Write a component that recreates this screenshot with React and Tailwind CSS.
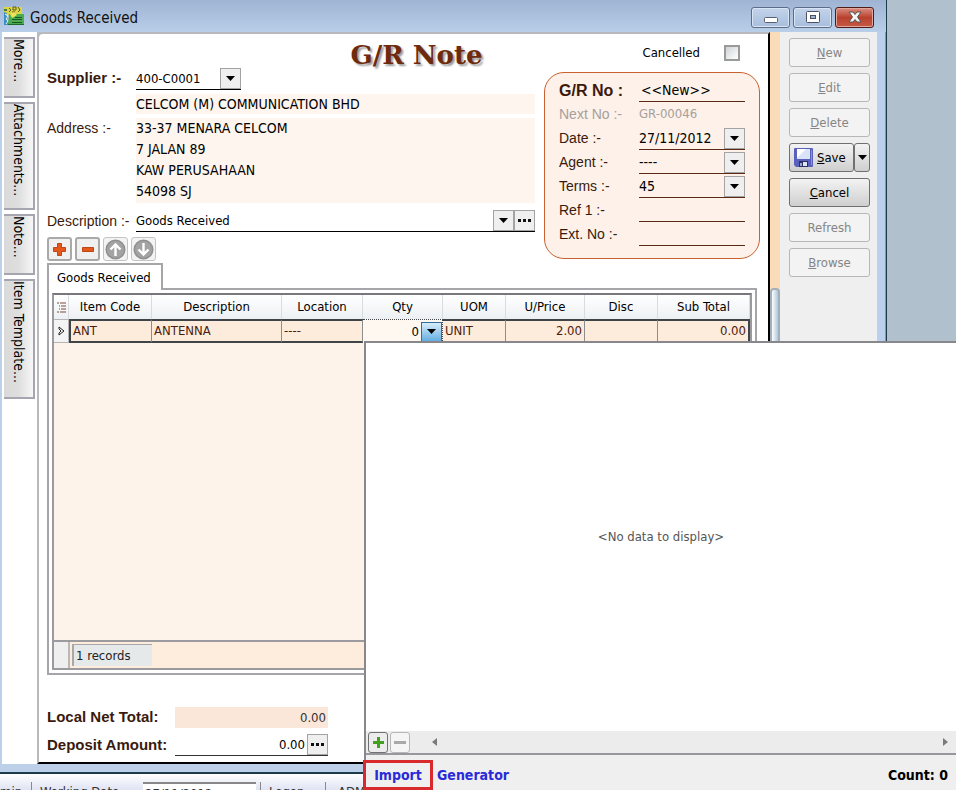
import { clsx } from "clsx";

const tahoma = "font-['DejaVu_Sans_Condensed','DejaVu_Sans',sans-serif]";

const sideTabs = [
  { label: "More...", height: "h-[61px]" },
  { label: "Attachments...", height: "h-[108px]" },
  { label: "Note...", height: "h-[61px]" },
  { label: "Item Template...", height: "h-[120px]" },
];

const columns = [
  { label: "Item Code", width: "w-[83px]" },
  { label: "Description", width: "w-[130px]" },
  { label: "Location", width: "w-[81px]" },
  { label: "Qty", width: "w-[80px]" },
  { label: "UOM", width: "w-[63px]" },
  { label: "U/Price", width: "w-[79px]" },
  { label: "Disc", width: "w-[73px]" },
  { label: "Sub Total", width: "" },
];

const Caret = () => (
  <svg width="9" height="5" viewBox="0 0 9 5" className="shrink-0">
    <path d="M0 0h9L4.5 5z" fill="#000" />
  </svg>
);

const Dots = () => (
  <svg width="13" height="3" viewBox="0 0 13 3" className="shrink-0">
    <path d="M0 0h3v3H0zM5 0h3v3H5zM10 0h3v3h-3z" fill="#111" />
  </svg>
);

const SmallButton = ({ label, children }) => (
  <button
    type="button"
    aria-label={label}
    className="flex h-[21px] w-[21px] shrink-0 items-center justify-center border border-[#a3a3a3] bg-[#efefef]"
  >
    {children}
  </button>
);

const AppIcon = () => (
  <svg width="20" height="20" viewBox="0 0 20 20">
    <path d="M0 1h18v8H0z" fill="#dcd544" />
    <path d="M5 2l2 2-2 2M9 1h3v3H9zM14 1l2 3-2 2M8 6h3" stroke="#5a5a22" fill="none" />
    <path d="M0 3h3v2H0z" fill="#4a7a3a" />
    <path d="M0 6l3 1-1 2 2 2-1 3 2 2v3H0z" fill="#3b8fc4" />
    <path d="M1 8l3 2-2 3 2 2-2 3" stroke="#e7f3fa" fill="none" />
    <path d="M5 8h15v11H4z" fill="#4aac4c" />
    <path d="M4 18h16v1H4z" fill="#1e6a2b" />
    <path d="M11 11.500h7M8 13.500h10M8 16.500h10" stroke="#175726" />
    <path d="M6 8l4-2 3 3-5 3z" fill="#ece35a" />
  </svg>
);

const FloppyIcon = () => (
  <svg width="19" height="19" viewBox="0 0 19 19">
    <path d="M0 1q0-1 1-1h17q1 0 1 1v17q0 1-1 1H2l-2-2z" fill="#5b60bd" />
    <path d="M3 1h13v10H3z" fill="#d9e4f8" />
    <path d="M3 1h9L3 10z" fill="#fff" />
    <path d="M5 13h9v6H5z" fill="#2c2f62" />
    <path d="M9 14h4v4H9z" fill="#dfe6f5" />
    <path d="M6 15h2v3H6z" fill="#9ea4cc" />
    <path d="M17 2h1v15h-1z" fill="#8a90e0" />
  </svg>
);

const ArrowIcon = ({ down }) => (
  <svg width="21" height="21" viewBox="0 0 21 21" className={clsx(down && "rotate-180")}>
    <circle cx="10.5" cy="10.5" r="10" fill="#8f8f8f" />
    <circle cx="10.5" cy="10.5" r="8.5" fill="#a3a3a3" />
    <path d="M10.5 17V6M5.5 10.5l5-5 5 5" stroke="#fff" strokeWidth="2.4" fill="none" />
  </svg>
);

const TitleBar = () => (
  <header className="flex h-8 shrink-0 items-center bg-linear-to-b from-[#9fb4d3] to-[#b9cee8] pl-1">
    <AppIcon />
    <h1 className={clsx(tahoma, "ml-1.5 flex-1 pt-1 text-[15px] text-[#111]")}>Goods Received</h1>
    <div className="mr-3 flex gap-[3px] pt-0.5">
      <button type="button" aria-label="Minimize" className="flex h-[21px] w-[39px] items-center justify-center rounded-[3px] border border-[#5d6d87] bg-linear-to-b from-[#c3d3ea] to-[#a7bedd] shadow-[inset_0_0_0_1px_#d9e5f5]">
        <svg width="14" height="7" viewBox="0 0 14 7" className="mt-1.5">
          <rect x=".5" y=".5" width="13" height="5" rx="1" fill="#fff" stroke="#5b6070" />
        </svg>
      </button>
      <button type="button" aria-label="Maximize" className="flex h-[21px] w-[39px] items-center justify-center rounded-[3px] border border-[#5d6d87] bg-linear-to-b from-[#c3d3ea] to-[#a7bedd] shadow-[inset_0_0_0_1px_#d9e5f5]">
        <svg width="14" height="12" viewBox="0 0 14 12">
          <rect x=".5" y=".5" width="13" height="11" rx="1" fill="#fff" stroke="#4b5060" />
          <rect x="4.5" y="4.5" width="5" height="3" fill="#9fb4d4" stroke="#4b5060" />
        </svg>
      </button>
      <button type="button" aria-label="Close" className="flex h-[21px] w-[39px] items-center justify-center rounded-[3px] border border-[#4f1a18] bg-linear-to-b from-[#d98d80] via-[#b9402e] to-[#c65a44] shadow-[inset_0_0_0_1px_#e2a79c]">
        <svg width="14" height="12" viewBox="0 0 14 12">
          <path d="M1 1h4l2 2.5L9 1h4L9.500 6l3.500 5H9L7 8.500 5 11H1l3.500-5z" fill="#f4f4f4" stroke="#555" />
        </svg>
      </button>
    </div>
  </header>
);

const SideTabs = () => (
  <nav className="flex w-[35px] shrink-0 flex-col gap-1 bg-white pt-[5px] pl-0.5">
    {sideTabs.map((tab) => (
      <button
        key={tab.label}
        type="button"
        className={clsx(
          tab.height,
          tahoma,
          "flex w-[31px] shrink-0 items-center border-2 border-l-0 border-[#a6a6b0] bg-linear-to-r from-[#dadada] via-[#dedede] to-[#f7f7f7] text-sm text-black [writing-mode:vertical-rl]"
        )}
      >
        {tab.label}
      </button>
    ))}
  </nav>
);

const ActionButton = ({ children, disabled }) => (
  <button
    type="button"
    disabled={disabled}
    className={clsx(
      "h-[29px] w-full rounded-[3px] border text-[13px]",
      disabled
        ? "border-[#b4b8ba] bg-[#f3f3f3] text-[#858585]"
        : "border-[#707070] bg-linear-to-b from-[#f3f3f3] to-[#cfcfcf] text-black"
    )}
  >
    {children}
  </button>
);

const Actions = () => (
  <aside className={clsx(tahoma, "flex w-[97px] shrink-0 flex-col gap-1.5 bg-[#efefef] pt-1.5 pr-[7px] pl-[9px]")}>
    <ActionButton disabled><u>N</u>ew</ActionButton>
    <ActionButton disabled><u>E</u>dit</ActionButton>
    <ActionButton disabled><u>D</u>elete</ActionButton>
    <div className="flex">
      <button type="button" className="flex h-[29px] flex-1 items-center gap-1 rounded-[3px] border border-[#707070] bg-linear-to-b from-[#f3f3f3] to-[#cfcfcf] pl-1 text-[13px] text-black">
        <FloppyIcon />
        <span><u>S</u>ave</span>
      </button>
      <button type="button" aria-label="Save options" className="flex h-[29px] w-4 items-center justify-center rounded-[3px] border border-[#707070] bg-linear-to-b from-[#f3f3f3] to-[#cfcfcf]">
        <Caret />
      </button>
    </div>
    <ActionButton><u>C</u>ancel</ActionButton>
    <ActionButton disabled>Refresh</ActionButton>
    <ActionButton disabled><u>B</u>rowse</ActionButton>
  </aside>
);

const labelClass = "font-['Liberation_Sans',Arial,sans-serif] text-[#3a1a0c] whitespace-nowrap";
const valueClass = clsx(tahoma, "min-w-0 flex-1 bg-transparent text-black outline-none");

const SupplierForm = () => (
  <div className="grid grid-cols-[89px_1fr] content-start">
    <label htmlFor="supplier" className={clsx(labelClass, "text-[15px] leading-5 font-bold")}>Supplier :-</label>
    <div className="flex w-[105px] border-b border-black">
      <input id="supplier" defaultValue="400-C0001" className={clsx(valueClass, "text-[13px]")} />
      <SmallButton label="Choose supplier"><Caret /></SmallButton>
    </div>
    <span />
    <div className={clsx(tahoma, "mt-1 h-5 bg-[#fef5ee] text-sm leading-5 text-black")}>
      CELCOM (M) COMMUNICATION BHD
    </div>
    <span className={clsx(labelClass, "mt-1 text-sm leading-5")}>Address :-</span>
    <address className={clsx(tahoma, "mt-1 h-[85px] bg-[#fef5ee] text-sm leading-[21px] text-black not-italic")}>
      33-37 MENARA CELCOM<br />
      7 JALAN 89<br />
      KAW PERUSAHAAN<br />
      54098 SJ
    </address>
    <label htmlFor="description" className={clsx(labelClass, "mt-2 text-sm leading-5")}>Description :-</label>
    <div className="mt-[7px] flex border-b border-black">
      <input id="description" defaultValue="Goods Received" className={clsx(valueClass, "text-[13px]")} />
      <SmallButton label="Choose description"><Caret /></SmallButton>
      <SmallButton label="Edit description"><Dots /></SmallButton>
    </div>
  </div>
);

const noteFields = [
  { id: "date", label: "Date :-", value: "27/11/2012", picker: true },
  { id: "agent", label: "Agent :-", value: "----", picker: true },
  { id: "terms", label: "Terms :-", value: "45", picker: true },
  { id: "ref1", label: "Ref 1 :-", value: "" },
  { id: "extno", label: "Ext. No :-", value: "" },
];

const NoteBox = () => (
  <section className="mt-1 flex h-[187px] w-[216px] shrink-0 flex-col rounded-[20px] border border-[#c8602f] bg-[#fdf1e9] px-3.5 pt-1.5">
    <div className="flex h-[23px] items-center">
      <label htmlFor="grno" className={clsx(labelClass, "w-20 text-base font-bold")}>G/R No :</label>
      <input id="grno" defaultValue="<<New>>" className={clsx(valueClass, "h-[22px] border-b border-[#5a2a16] pl-0.5 text-sm")} />
    </div>
    <div className="flex h-6 items-center text-[#a5a09c]">
      <span className="w-20 font-['Liberation_Sans',Arial,sans-serif] text-sm">Next No :-</span>
      <span className={clsx(tahoma, "text-[13px]")}>GR-00046</span>
    </div>
    {noteFields.map((field) => (
      <div key={field.id} className="flex h-6 items-center">
        <label htmlFor={field.id} className={clsx(labelClass, "w-20 text-sm")}>{field.label}</label>
        <div className="flex h-[23px] min-w-0 flex-1 items-end border-b border-[#5a2a16]">
          <input id={field.id} defaultValue={field.value} className={clsx(valueClass, "h-[21px] text-sm")} />
          {field.picker && <SmallButton label={`Choose ${field.id}`}><Caret /></SmallButton>}
        </div>
      </div>
    ))}
  </section>
);

const RowTools = () => (
  <div className="mt-[5px] flex gap-[3px]">
    <button type="button" aria-label="Add row" className="flex h-6 w-[25px] items-center justify-center rounded-[3px] border-2 border-[#a9a9a9] bg-[#f0f0f0]">
      <svg width="13" height="13" viewBox="0 0 13 13">
        <path d="M4.500.5h4v4h4v4h-4v4h-4v-4h-4v-4h4z" fill="#e5581a" stroke="#b8471a" />
      </svg>
    </button>
    <button type="button" aria-label="Remove row" className="flex h-6 w-[25px] items-center justify-center rounded-[3px] border-2 border-[#a9a9a9] bg-[#f0f0f0]">
      <svg width="12" height="5" viewBox="0 0 12 5">
        <path d="M.5.5h11v4H.5z" fill="#e5581a" stroke="#b8471a" />
      </svg>
    </button>
    <button type="button" aria-label="Move up" className="flex h-6 w-[25px] items-center justify-center rounded-[3px] border border-[#c4c4c4] bg-[#f3f3f3]">
      <ArrowIcon />
    </button>
    <button type="button" aria-label="Move down" className="flex h-6 w-[25px] items-center justify-center rounded-[3px] border border-[#c4c4c4] bg-[#f3f3f3]">
      <ArrowIcon down />
    </button>
  </div>
);

const cellClass = "overflow-hidden border-y-2 border-r border-[#8d8d8d] border-y-[#3f4448] bg-[#fdebdb] px-0.5 py-0 whitespace-nowrap";

const ItemGrid = () => (
  <div className="mr-[3px] flex flex-1 flex-col border-2 border-[#a5a5aa] p-[3px]">
    <div className={clsx(tahoma, "flex flex-1 flex-col border-2 border-[#9a9a9f] border-t-[#77777c] bg-[#fdf3ea] text-[13px]")}>
      <table className="w-full table-fixed border-separate border-spacing-0">
        <thead>
          <tr className="h-6 bg-linear-to-b from-white to-[#edf0f3] text-black">
            <th className="w-[15px] border-r border-[#d9dcdf] p-0">
              <svg width="9" height="11" viewBox="0 0 9 11" className="mx-auto">
                <path d="M0 1h2M3 1h6M2 4h1M4 4h5M2 7h1M4 7h5M0 10h2M3 10h6" stroke="#7c4b3c" strokeWidth="1.200" />
              </svg>
            </th>
            {columns.map((col) => (
              <th key={col.label} className={clsx(col.width, "border-r border-[#d9dcdf] p-0 font-normal")}>
                {col.label}
              </th>
            ))}
          </tr>
        </thead>
        <tbody>
          <tr className="h-6 text-[#4a1d10]">
            <td className="border-y border-r border-[#b5b5b5] bg-[#f4f4f4] p-0">
              <svg width="7" height="10" viewBox="0 0 7 10" className="mx-auto">
                <path d="M1 1l5 4-5 4V7l2-2-2-2z" fill="none" stroke="#222" />
              </svg>
            </td>
            <td className={clsx(cellClass, "border-l-2 border-l-[#3f4448]")}>ANT</td>
            <td className={cellClass}>ANTENNA</td>
            <td className={cellClass}>----</td>
            <td className="border-t border-r border-dotted border-[#444] bg-[#fff8f1] p-0 text-black">
              <div className="flex items-center justify-end gap-0.5">
                <span>0</span>
                <button type="button" aria-label="Open quantity list" className="flex h-5 w-[21px] items-center justify-center border border-[#2f6f9f] bg-linear-to-b from-[#d8ecfa] to-[#62aee0]">
                  <Caret />
                </button>
              </div>
            </td>
            <td className={cellClass}>UNIT</td>
            <td className={clsx(cellClass, "text-right")}>2.00</td>
            <td className={cellClass}></td>
            <td className={clsx(cellClass, "border-r-2 border-r-[#3f4448] text-right")}>0.00</td>
          </tr>
        </tbody>
      </table>
      <div className="mt-auto flex h-7 border-t-2 border-[#9a9a9f] bg-[#feecdc]">
        <div className="w-4 border-r-2 border-[#b9b9b9] bg-[#efefef]" />
        <div className="my-0.5 ml-0.5 w-20 border-t border-l-2 border-[#a8a8a8] bg-[#e6e9ea] pl-0.5 leading-[22px] text-[#222]">
          1 records
        </div>
      </div>
    </div>
  </div>
);

const Totals = () => (
  <div className="mt-[31px] mb-1.5 flex w-[281px] flex-col gap-[5px]">
    <div className="flex items-center">
      <span className={clsx(labelClass, "w-[128px] text-[15px] font-bold")}>Local Net Total:</span>
      <span className={clsx(tahoma, "h-[21px] flex-1 bg-[#fbe6da] pr-0.5 text-right text-[13px] leading-[21px] text-[#333]")}>0.00</span>
    </div>
    <div className="flex items-center">
      <label htmlFor="deposit" className={clsx(labelClass, "w-[128px] text-[15px] font-bold")}>Deposit Amount:</label>
      <div className="flex min-w-0 flex-1 border-b border-[#333]">
        <input id="deposit" defaultValue="0.00" className={clsx(valueClass, "pr-0.5 text-right text-[13px]")} />
        <SmallButton label="Edit deposit"><Dots /></SmallButton>
      </div>
    </div>
  </div>
);

const QtyPopup = () => (
  <div className={clsx(tahoma, "absolute top-[341px] right-[3px] bottom-0 left-[364px] flex flex-col border-t-2 border-l-2 border-[#87878c] bg-[#efefef]")}>
    <div className="flex flex-1 items-center justify-center bg-white text-[13px] text-[#555]">
      &lt;No data to display&gt;
    </div>
    <div className="flex h-6 items-center gap-0.5 border-b-2 border-[#97979c] bg-[#ececec] pl-0.5">
      <button type="button" aria-label="Add" className="flex h-[21px] w-5 items-center justify-center rounded-[3px] border border-[#707070] bg-[#ececec]">
        <svg width="11" height="11" viewBox="0 0 11 11">
          <path d="M4 0h3v4h4v3H7v4H4V7H0V4h4z" fill="#43a01e" />
        </svg>
      </button>
      <button type="button" aria-label="Remove" className="flex h-[21px] w-5 items-center justify-center rounded-[3px] border border-[#b4b8ba] bg-[#f5f5f5]">
        <svg width="12" height="3" viewBox="0 0 12 3">
          <path d="M0 0h12v3H0z" fill="#a9a9a9" />
        </svg>
      </button>
      <div className="ml-5 flex flex-1 items-center justify-between pr-2">
        <svg width="5" height="8" viewBox="0 0 5 8"><path d="M5 0v8L0 4z" fill="#7b7b7b" /></svg>
        <svg width="5" height="8" viewBox="0 0 5 8"><path d="M0 0v8l5-4z" fill="#7b7b7b" /></svg>
      </div>
    </div>
    <div className="flex h-[35px] items-center justify-between pt-1 text-sm font-bold">
      <div className="flex">
        <a href="#import" className="-ml-[3px] flex h-[30px] w-[70px] items-center justify-center border-3 border-[#d82a2c] text-[#2a2ad8]">Import</a>
        <a href="#generator" className="ml-1 flex items-center text-[#2a2ad8]">Generator</a>
      </div>
      <span className="mr-2 text-black">Count: 0</span>
    </div>
  </div>
);

const StatusBar = () => (
  <footer className={clsx(tahoma, "flex h-4 shrink-0 items-start overflow-hidden bg-linear-to-b from-white to-[#dfe3f3] pt-2 text-[13px] leading-5 text-[#333]")}>
    <span className="w-8 shrink-0 border-r border-[#888]">min</span>
    <label htmlFor="workdate" className="w-[111px] shrink-0 pl-2">Working Date</label>
    <input id="workdate" defaultValue="27/11/2012" className="w-[113px] shrink-0 border-t-2 border-[#888] bg-white pl-0.5" />
    <span className="ml-1 w-[66px] shrink-0 border-x border-[#888] pl-2">Logon</span>
    <span className="shrink-0 pl-3">ADMIN</span>
  </footer>
);

export default function App() {
  return (
    <div className="relative flex h-screen min-h-[700px] flex-col overflow-hidden bg-white pr-[3px]">
      <div className="flex flex-1 bg-[#b0c0cc]">
        <div className="flex min-w-0 flex-1 flex-col border-r border-b-2 border-[#1d3a48]">
          <TitleBar />
          <div className="flex flex-1 border-b-8 border-l-2 border-[#bcd0ea]">
            <SideTabs />
            <main className="flex min-w-0 flex-1 flex-col rounded-tl-md border-2 border-[#b9b9bd] border-r-black border-b-black bg-white px-2">
              <div className="flex h-[34px] items-center justify-end pt-1">
                <h2 className="mr-40 pt-1 font-['DejaVu_Serif',serif] text-[26px] leading-7 font-bold text-[#6e2a0c] [text-shadow:2px_2px_2px_#999]">G/R Note</h2>
                <label className={clsx(tahoma, "mr-5 flex items-center gap-6 text-[13px] text-black")}>
                  Cancelled
                  <input type="checkbox" className="h-4 w-4 appearance-none border-2 border-[#9a9a9a] bg-linear-to-br from-[#cfd4d8] to-white" />
                </label>
              </div>
              <div className="flex gap-[9px]">
                <div className="min-w-0 flex-1">
                  <SupplierForm />
                  <RowTools />
                </div>
                <NoteBox />
              </div>
              <div className="mt-0.5 flex flex-1 flex-col">
                <button type="button" className={clsx(tahoma, "relative -mb-0.5 h-[27px] self-start border-2 border-b-0 border-[#a5a5aa] bg-white pr-2.5 pl-2 text-[13px] text-black")}>
                  Goods Received
                </button>
                <ItemGrid />
              </div>
              <Totals />
            </main>
            <div className="flex w-2.5 shrink-0 flex-col bg-[#fbdcb8] pt-64">
              <div className="flex-1 rounded-t border-2 border-[#a3aeb8] bg-linear-to-r from-white to-[#a9c8e0]" />
            </div>
            <Actions />
            <div className="w-[9px] shrink-0 border-r border-[#35b8dc] bg-[#bad0ec]" />
          </div>
        </div>
        <div className="w-[69px] shrink-0" />
      </div>
      <StatusBar />
      <QtyPopup />
    </div>
  );
}
